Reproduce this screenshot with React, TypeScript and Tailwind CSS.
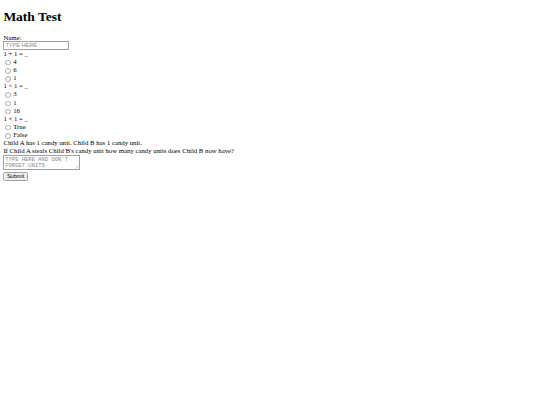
import React from "react";

function Radio({ label }: { label: string }) {
  return (
    <div className="flex items-start h-[8.25px] leading-[7.76px]">
      <span className="ml-[1.6px] mr-[2.6px] mt-[2.4px] w-[5.6px] h-[5.6px] rounded-full border-[0.5px] border-[#ababab] bg-white shrink-0" />
      <span className="pt-[0.3px]">{label}</span>
    </div>
  );
}

export default function App() {
  return (
    <div
      className="bg-white min-h-[405px] pt-[9.05px] px-[3.375px] text-black text-[6.75px] leading-[7.76px]"
      style={{ fontFamily: '"Liberation Serif", "Times New Roman", serif' }}
    >
      <h1 className="text-[13.5px] font-bold leading-[15.52px] mb-[9.05px]">Math Test</h1>
      <div>Name:</div>
      <div className="h-[8.3px] flex items-start">
        <div
          className="w-[66px] h-[8.9px] border-[0.6px] border-[#a0a0a0] px-[1px] flex items-center text-[5.6px] text-[#8a8a8a]"
          style={{ fontFamily: '"Liberation Sans", Arial, sans-serif' }}
        >
          TYPE HERE
        </div>
      </div>
      <div>1 + 1 = _</div>
      <Radio label="4" />
      <Radio label="6" />
      <Radio label="1" />
      <div>1 × 1 = _</div>
      <Radio label="3" />
      <Radio label="1" />
      <Radio label="16" />
      <div>1 &lt; 1 = _</div>
      <Radio label="True" />
      <Radio label="False" />
      <div>Child A has 1 candy unit. Child B has 1 candy unit.</div>
      <div>If Child A steals Child B's candy unit how many candy units does Child B now have?</div>
      <div className="pt-[0.6px]">
        <div
          className="relative w-[77px] h-[15px] border-[0.6px] border-[#a0a0a0] px-[0.9px] pt-[0.7px] text-[5.5px] leading-[6.2px] text-[#8a8a8a]"
          style={{ fontFamily: '"Liberation Mono", "Courier New", monospace' }}
        >
          <div>TYPE HERE AND DON'T</div>
          <div>FORGET UNITS</div>
          <svg className="absolute right-[0.4px] bottom-[0.4px]" width="3.5" height="3.5" viewBox="0 0 4 4">
            <path d="M4 0.5 L0.5 4 M4 2.5 L2.5 4" stroke="#999" strokeWidth="0.5" />
          </svg>
        </div>
      </div>
      <div className="pt-[1.8px]">
        <button
          className="h-[8.6px] px-[2.5px] border-[0.5px] border-[#a0a0a0] rounded-[1.5px] bg-[#efefef] text-[5.6px] leading-none text-black"
          style={{ fontFamily: '"Liberation Sans", Arial, sans-serif' }}
        >
          Submit
        </button>
      </div>
    </div>
  );
}
